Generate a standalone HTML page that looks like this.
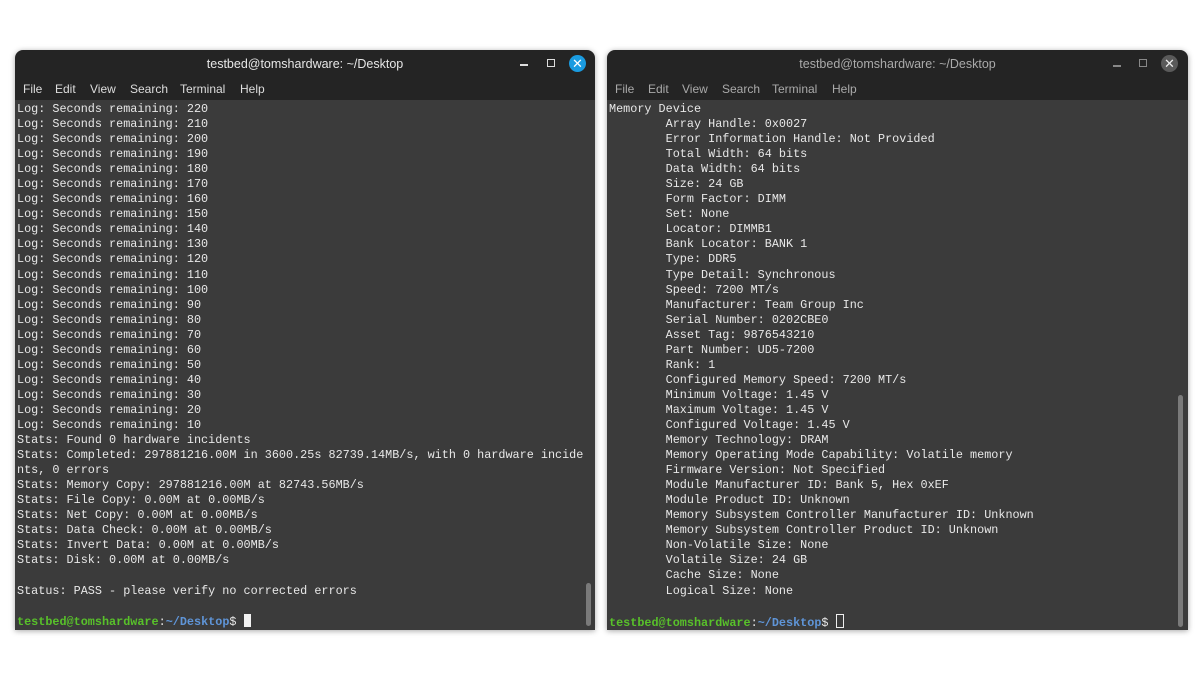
<!DOCTYPE html>
<html><head><meta charset="utf-8"><style>
body{margin:0;width:1200px;height:675px;background:#fff;position:relative;overflow:hidden;font-family:"Liberation Sans",sans-serif}
.win{position:absolute;top:50px;height:580px;background:#242424;border-radius:8px 8px 0 0;box-shadow:0 1px 6px rgba(0,0,0,.35);overflow:hidden}
.title{position:absolute;top:0;left:0;right:0;height:28px;text-align:center;line-height:28px;font-size:12.5px;color:#e6e6e6}
.menu{position:absolute;top:28px;left:0;right:0;height:22px;font-size:12px;color:#ddd}
.menu span{position:absolute;top:4px}
.body{position:absolute;top:50px;left:0;right:0;bottom:0;background:#3b3b3b}
pre{margin:0;position:absolute;left:2px;top:2px;font-family:"Liberation Mono",monospace;font-size:11.8px;line-height:15.05px;color:#e8e8e8}
.g{color:#58c12a;font-weight:bold}.b{color:#5f95d8;font-weight:bold}
.cur{display:inline-block;width:7px;height:13px;background:#f2f2f2;vertical-align:-2px}
.curo{display:inline-block;width:6px;height:12px;border:1px solid #eee;vertical-align:-2px}
.sb{position:absolute;width:5px;background:#7a7a7a;border-radius:3px}
</style></head><body>
<div class="win" style="left:15px;width:580px">
<div class="title">testbed@tomshardware: ~/Desktop</div>
<div style="position:absolute;left:505px;top:14px;width:8px;height:1.5px;background:#ddd"></div>
<div style="position:absolute;left:532px;top:9px;width:6px;height:6px;border:1.3px solid #ddd"></div>
<div style="position:absolute;left:554px;top:5px;width:17px;height:17px;border-radius:50%;background:#1a9be0;color:#fff;font-size:13px;line-height:17px;text-align:center">✕</div>
<div class="menu"><span style="left:8px">File</span><span style="left:40px">Edit</span><span style="left:75px">View</span><span style="left:115px">Search</span><span style="left:165px">Terminal</span><span style="left:225px">Help</span></div>
<div class="body">
<pre>Log: Seconds remaining: 220
Log: Seconds remaining: 210
Log: Seconds remaining: 200
Log: Seconds remaining: 190
Log: Seconds remaining: 180
Log: Seconds remaining: 170
Log: Seconds remaining: 160
Log: Seconds remaining: 150
Log: Seconds remaining: 140
Log: Seconds remaining: 130
Log: Seconds remaining: 120
Log: Seconds remaining: 110
Log: Seconds remaining: 100
Log: Seconds remaining: 90
Log: Seconds remaining: 80
Log: Seconds remaining: 70
Log: Seconds remaining: 60
Log: Seconds remaining: 50
Log: Seconds remaining: 40
Log: Seconds remaining: 30
Log: Seconds remaining: 20
Log: Seconds remaining: 10
Stats: Found 0 hardware incidents
Stats: Completed: 297881216.00M in 3600.25s 82739.14MB/s, with 0 hardware incide
nts, 0 errors
Stats: Memory Copy: 297881216.00M at 82743.56MB/s
Stats: File Copy: 0.00M at 0.00MB/s
Stats: Net Copy: 0.00M at 0.00MB/s
Stats: Data Check: 0.00M at 0.00MB/s
Stats: Invert Data: 0.00M at 0.00MB/s
Stats: Disk: 0.00M at 0.00MB/s

Status: PASS - please verify no corrected errors

<span class="g">testbed@tomshardware</span>:<span class="b">~/Desktop</span>$ <span class="cur"></span></pre>
<div class="sb" style="left:571px;top:483px;height:43px"></div>
</div></div>

<div class="win" style="left:607px;width:581px">
<div class="title" style="color:#aaa">testbed@tomshardware: ~/Desktop</div>
<div style="position:absolute;left:506px;top:15px;width:8px;height:1.5px;background:#888"></div>
<div style="position:absolute;left:532px;top:9px;width:6px;height:6px;border:1.3px solid #888"></div>
<div style="position:absolute;left:554px;top:5px;width:17px;height:17px;border-radius:50%;background:#5a5a5a;color:#eee;font-size:13px;line-height:17px;text-align:center">✕</div>
<div class="menu" style="color:#aaa"><span style="left:8px">File</span><span style="left:41px">Edit</span><span style="left:75px">View</span><span style="left:115px">Search</span><span style="left:165px">Terminal</span><span style="left:225px">Help</span></div>
<div class="body">
<pre>Memory Device
	Array Handle: 0x0027
	Error Information Handle: Not Provided
	Total Width: 64 bits
	Data Width: 64 bits
	Size: 24 GB
	Form Factor: DIMM
	Set: None
	Locator: DIMMB1
	Bank Locator: BANK 1
	Type: DDR5
	Type Detail: Synchronous
	Speed: 7200 MT/s
	Manufacturer: Team Group Inc
	Serial Number: 0202CBE0
	Asset Tag: 9876543210
	Part Number: UD5-7200
	Rank: 1
	Configured Memory Speed: 7200 MT/s
	Minimum Voltage: 1.45 V
	Maximum Voltage: 1.45 V
	Configured Voltage: 1.45 V
	Memory Technology: DRAM
	Memory Operating Mode Capability: Volatile memory
	Firmware Version: Not Specified
	Module Manufacturer ID: Bank 5, Hex 0xEF
	Module Product ID: Unknown
	Memory Subsystem Controller Manufacturer ID: Unknown
	Memory Subsystem Controller Product ID: Unknown
	Non-Volatile Size: None
	Volatile Size: 24 GB
	Cache Size: None
	Logical Size: None

<span class="g">testbed@tomshardware</span>:<span class="b">~/Desktop</span>$ <span class="curo"></span></pre>
<div class="sb" style="left:571px;top:295px;height:232px"></div>
</div></div>
</body></html>
